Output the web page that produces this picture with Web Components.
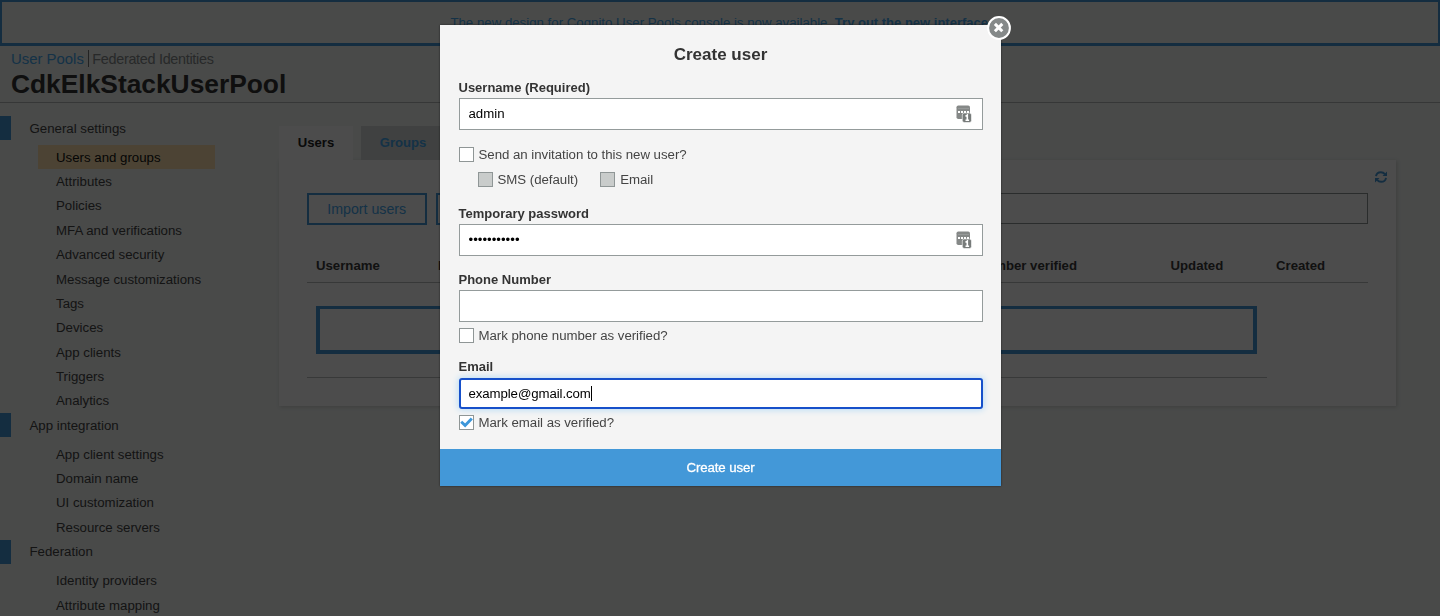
<!DOCTYPE html>
<html lang="en"><head><meta charset="utf-8"><title>User Pools</title>
<style>
html,body{margin:0;height:616px;overflow:hidden;background:#f3f7f4}
body{font:13.25px/18px "Liberation Sans",Arial,sans-serif;color:#444}
</style></head><body>
<pool-console></pool-console>
<create-user-modal></create-user-modal>
<script>
const define=(name,html,setup)=>customElements.define(name,class extends HTMLElement{
  connectedCallback(){
    if(this.shadowRoot)return;
    const t=document.createElement('template');t.innerHTML=html;
    this.attachShadow({mode:'open'}).append(t.content.cloneNode(true));
    if(setup)setup(this,this.shadowRoot);
  }
});

define('top-banner',`<style>
:host{display:block;box-sizing:border-box;height:46px;border:2px solid #4398d8;border-bottom-width:3px;text-align:center;color:#46a8ee;padding:12px 0 0 2px;white-space:nowrap}
</style><slot></slot>`);

define('pool-header',`<style>
:host{display:block;box-sizing:border-box;height:57px;border-bottom:1px solid #b4b8b8;padding:4px 0 0 11px}
nav{display:flex;font-size:14.9px;line-height:19px;height:18px}
a{color:#46a8ee}
span{color:#858b8b;border-left:1px solid #777;height:17px;margin-left:4px;padding-left:3.5px;font-size:14.4px;letter-spacing:-.3px}
h1{margin:1px 0 0;font-size:26.35px;line-height:31px;color:#333}
</style><nav><a>User Pools</a><span>Federated Identities</span></nav><h1><slot></slot></h1>`);

define('nav-section',`<style>
:host{display:block}
.head{display:flex;align-items:center;height:24.35px;margin-bottom:4.6px}
.head i{width:11px;height:100%;background:#4398d8;margin-right:18.5px}
.head b{font-weight:400;padding-top:1px}
</style><div class="head"><i></i><b></b></div><slot></slot>`,
(el,r)=>r.querySelector('b').textContent=el.getAttribute('label'));

define('nav-item',`<style>
:host{display:flex;align-items:center;box-sizing:border-box;height:24.38px;width:177.5px;margin-left:37.5px;padding:1px 0 0 18.5px;white-space:nowrap}
:host([active]){background:#fde2ae;color:#111}
</style><slot></slot>`);

define('side-nav',`<style>:host{display:block;width:279px;padding-top:13px;flex:none}</style><slot></slot>`);

define('outline-button',`<style>
:host{box-sizing:border-box;display:flex;align-items:center;justify-content:center;height:32px;border:2px solid #4398d8;color:#46a8ee;font-size:14.2px;white-space:nowrap}
</style><slot></slot>`);

define('users-panel',`<style>
:host{display:block;width:1117px;padding-top:23px}
.tabs{display:flex;gap:8px;height:34px;font-weight:700;font-size:13.1px}
.tabs div{display:flex;align-items:center;justify-content:center;width:74px;background:#fff;color:#222}
.tabs .off{width:84px;background:#d5dad9;color:#46a8ee}
.card{box-sizing:border-box;height:246px;background:#fff;box-shadow:1px 1px 4px rgba(0,0,0,.16);padding:0 28px}
.refresh{display:flex;justify-content:flex-end;height:33px;margin-right:-19px}
.refresh svg{margin-top:10.5px}
.tools{display:flex;gap:9.5px;height:32px}
.tools outline-button:first-child{width:119.5px}
.tools outline-button:nth-child(2){width:112px}
.search{flex:1;box-sizing:border-box;height:31px;border:1px solid #8d9494;border-top-width:1px}
.cols{display:grid;grid-template-columns:122px 120px 145px 145px 322.5px 105.5px 1fr;padding:30px 0 7px 9px;border-bottom:1px solid #b9bdbd;height:20px;font-weight:700;font-size:13.2px;line-height:22px;color:#3a3a3a;white-space:nowrap}
.cols .phone{text-align:right;padding-right:93.5px}
.empty{box-sizing:border-box;width:941px;height:48px;margin:23px 0 0 9px;border:4px solid #4398d8;border-top-width:3.5px}
.rule{width:960px;height:1px;background:#bbbfbf;margin-top:23px}
</style>
<div class="tabs"><div>Users</div><div class="off">Groups</div></div>
<div class="card">
<div class="refresh"><svg width="12" height="12" viewBox="0 0 12 12"><g fill="none" stroke="#4398d8" stroke-width="1.9"><path d="M1 5.2C1.4 2.6 3.5 1.2 5.9 1.2c1.6 0 3 .7 4 1.9"/><path d="M11 6.8c-.4 2.6-2.5 4-4.9 4-1.6 0-3-.7-4-1.9"/></g><path fill="#4398d8" d="M12 .4V5H7.5zM0 11.6V7h4.5z"/></svg></div>
<div class="tools"><outline-button>Import users</outline-button><outline-button></outline-button><div class="search"></div></div>
<div class="cols"><span>Username</span><span>Enabled</span><span></span><span></span><span class="phone">Phone number verified</span><span>Updated</span><span>Created</span></div>
<div class="empty"></div><div class="rule"></div></div>`);

define('pool-console',`<style>:host{display:block;height:616px;overflow:hidden}main{display:flex}</style>
<top-banner>The new design for Cognito User Pools console is now available. <b style="font-size:13px">Try out the new interface.</b></top-banner>
<pool-header>CdkElkStackUserPool</pool-header>
<main><side-nav>
<nav-section label="General settings"><nav-item active>Users and groups</nav-item><nav-item>Attributes</nav-item><nav-item>Policies</nav-item><nav-item>MFA and verifications</nav-item><nav-item>Advanced security</nav-item><nav-item>Message customizations</nav-item><nav-item>Tags</nav-item><nav-item>Devices</nav-item><nav-item>App clients</nav-item><nav-item>Triggers</nav-item><nav-item>Analytics</nav-item></nav-section>
<nav-section label="App integration"><nav-item>App client settings</nav-item><nav-item>Domain name</nav-item><nav-item>UI customization</nav-item><nav-item>Resource servers</nav-item></nav-section>
<nav-section label="Federation"><nav-item>Identity providers</nav-item><nav-item>Attribute mapping</nav-item></nav-section>
</side-nav><users-panel></users-panel></main>`);

define('form-field',`<style>
:host{display:block}
label{display:block;height:18px;line-height:19px;font-weight:700;font-size:13px;color:#333}
.box{box-sizing:border-box;display:flex;align-items:center;height:32px;margin-top:2px;padding:0 10px 0 9px;border:1px solid #949b9b;background:#fff;color:#000}
.box svg{display:none;margin-left:auto}
:host([key]) svg{display:block}
:host([focus]) .box{height:31px;margin-top:3px;padding:0 8px;border:2px solid #1650ca;border-radius:3px;box-shadow:0 0 6px 1px #b9dcf5;letter-spacing:-.1px}
.caret{display:none;width:1px;height:15px;background:#000}
:host([focus]) .caret{display:block}
</style><label></label><div class="box"><span><slot></slot></span><i class="caret"></i>
<svg width="16" height="18" viewBox="0 0 16 18"><rect x=".5" y=".5" width="13.5" height="13.5" rx="1.8" fill="#858887"/><path stroke="#fff" stroke-width="2" stroke-dasharray="2 1" d="M2 7h11"/><path stroke="#969998" d="M2 3.5h11"/><rect x="6.3" y="8" width="9.2" height="9.5" rx="2" fill="#777b7a" stroke="#fff" stroke-width=".6"/><path d="M9.5 11.3l1.8-1.2v5.4M9.5 15.2h3.6" fill="none" stroke="#fff" stroke-width="1.6"/></svg></div>`,
(el,r)=>{r.querySelector('label').textContent=el.getAttribute('label')});

define('check-box',`<style>
:host{display:flex;align-items:center;height:18px;gap:5px;white-space:nowrap}
i{box-sizing:border-box;width:15px;height:15px;border:1px solid #8f9696;background:#fff;display:flex;align-items:center;justify-content:center}
span{padding-top:1px;letter-spacing:-.03px}
:host([disabled]) i{background:#c9cccb}
svg{display:none}:host([checked]) svg{display:block}
</style><i><svg width="13" height="12" viewBox="0 0 13 12"><path d="M1.2 5.8l3.9 3.6L11.8 2.6" fill="none" stroke="#3d97da" stroke-width="2.9"/></svg></i><span><slot></slot></span>`);

define('close-button',`<style>
:host{position:absolute;right:-9.5px;top:-9.5px;width:24px;height:24px;display:block}
svg{display:block}
</style><svg width="24" height="24" viewBox="0 0 24 24"><circle cx="12" cy="12" r="10.9" fill="#858989" stroke="#fff" stroke-width="2"/><path d="M7.9 7.9l7.4 7.4m0-7.4l-7.4 7.4" stroke="#fff" stroke-width="3"/></svg>`);

define('create-user-modal',`<style>
:host{position:fixed;inset:0;display:flex;justify-content:center;align-items:flex-start;padding:25px 0 0 1px;background:rgba(0,0,0,.7)}
.modal{position:relative;width:561px;height:461px;background:#f4f4f4;color:#444;box-shadow:0 0 2px rgba(0,0,0,.6)}
.form{padding:0 18.5px}
h2{margin:0;padding-top:18px;height:35px;text-align:center;font-size:17px;line-height:23px;color:#333}
.invite{margin-top:15px}
.sub{display:flex;gap:22px;margin:7px 0 16px 19px}
.sub check-box{letter-spacing:-.05px}
.mark{margin-top:4px}
footer{height:37px;margin-top:18px;background:#4398d8;color:#fff;display:flex;align-items:center;justify-content:center;letter-spacing:-.1px;-webkit-text-stroke:.3px #fff}
</style><div class="modal"><close-button></close-button><div class="form">
<h2>Create user</h2>
<form-field label="Username (Required)" key>admin</form-field>
<check-box class="invite">Send an invitation to this new user?</check-box>
<div class="sub"><check-box disabled>SMS (default)</check-box><check-box disabled>Email</check-box></div>
<form-field label="Temporary password" key>•••••••••••</form-field>
<form-field label="Phone Number" style="margin-top:14px"></form-field>
<check-box class="mark">Mark phone number as verified?</check-box>
<form-field label="Email" focus style="margin-top:13px">example@gmail.com</form-field>
<check-box class="mark" checked>Mark email as verified?</check-box>
</div><footer>Create user</footer></div>`);
</script></body></html>
